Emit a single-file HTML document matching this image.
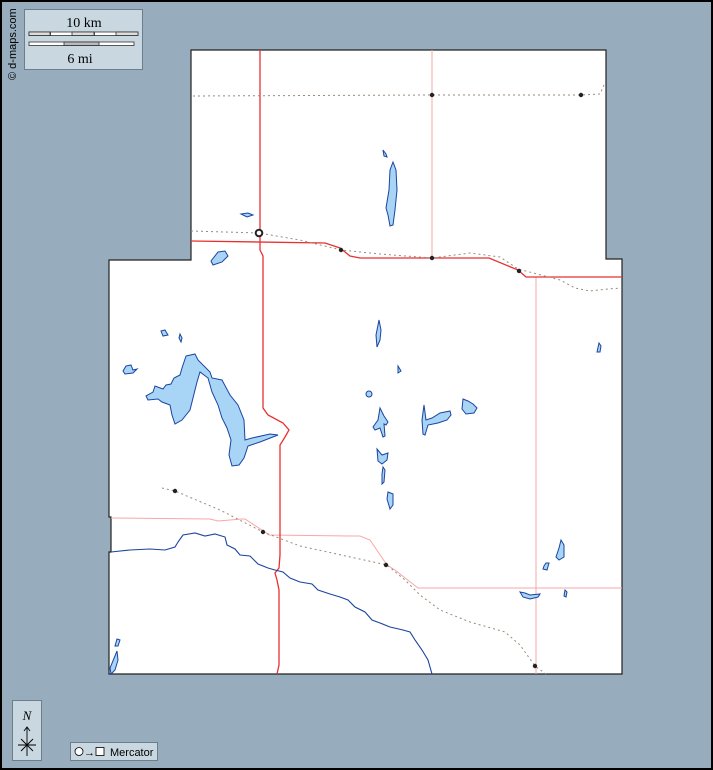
<!DOCTYPE html>
<html><head><meta charset="utf-8"><style>
html,body{margin:0;padding:0;width:713px;height:770px;overflow:hidden;background:#000}
svg{display:block}
</style></head><body>
<svg width="713" height="770" viewBox="0 0 713 770" xmlns="http://www.w3.org/2000/svg">
<rect x="0" y="0" width="713" height="770" fill="#000"/>
<rect x="2" y="2" width="709" height="766" fill="#97adbd"/>
<!-- map area -->
<path d="M191,50 L606,50 L606,259 L622,259 L622,674 L109,674 L109,552 L111,552 L111,517 L109,517 L109,260 L191,260 Z" fill="#fff" stroke="#222" stroke-width="1.2"/>
<!-- minor roads pink -->
<g fill="none" stroke="#f6a8a8" stroke-width="1">
<path d="M432,50 L432,258"/>
<path d="M536,277 L536,674"/>
<path d="M111,518 L210,519 L218,521 L242,519 L245,519 L265,532 L269,535 L350,536 L360,536 L370,540 L387,565 L395,570 L418,588 L622,588"/>
</g>
<!-- major road red -->
<g fill="none" stroke="#e83030" stroke-width="1.3">
<path d="M260,50 L260,232 L260,250 L263,256 L263,408 L268,415 L283,423 L289,430 L285,437 L280,445 L280,520 L280,555 L279,568 L275,573 L277,580 L279,590 L279,665 L277,674"/>
<path d="M191,241 L325,243 L340,248 L350,256 L360,258 L432,258 L489,258 L518,270 L526,277 L622,277"/>
</g>
<!-- railways dotted -->
<g fill="none" stroke="#9a8a7a" stroke-width="1" stroke-dasharray="2,3">
<path d="M193,96 L432,95 L581,95 L600,94 L604,85"/>
<path d="M191,231 L259,233 L300,240 L341,250 L380,254 L432,258 L470,253 L500,257 L518,269 L560,280 L575,288 L590,291 L608,289 L622,288"/>
<path d="M162,488 L175,491 L220,510 L263,532 L300,546 L387,565 L405,580 L420,595 L440,610 L470,622 L505,632 L520,645 L535,666 L546,674"/>
</g>
<!-- rivers -->
<g fill="none" stroke="#1a44a0" stroke-width="1.1">
<path d="M111,552 L130,550 L150,549 L165,550 L175,547 L178,542 L183,535 L195,533 L205,536 L215,534 L225,537 L227,545 L235,549 L240,555 L250,556 L258,564 L268,568 L275,570 L283,572 L290,578 L300,582 L312,584 L318,590 L330,594 L340,597 L348,600 L355,607 L365,612 L372,620 L380,623 L390,627 L403,630 L410,632 L415,640 L422,650 L428,660 L432,674"/>
</g>
<!-- lakes -->
<g fill="#a8d4f5" stroke="#1a44a0" stroke-width="1">
<path d="M393,162 L396,170 L397,190 L395,210 L393,225 L390,226 L388,215 L386,208 L389,190 L390,170 Z"/>
<path d="M383,150 L386,154 L387,157 L384,156 Z"/>
<path d="M241,214 L248,213 L253,215 L247,217 Z"/>
<path d="M218,252 L225,251 L228,256 L222,262 L213,265 L211,261 Z"/>
<path d="M186,356 L195,354 L198,360 L210,372 L212,378 L222,380 L230,395 L238,405 L244,420 L245,440 L252,438 L270,434 L278,435 L260,442 L248,446 L244,458 L239,465 L232,466 L229,455 L231,440 L227,428 L222,418 L218,405 L212,392 L208,378 L200,372 L197,382 L193,398 L190,410 L182,420 L175,424 L172,415 L170,405 L162,402 L158,399 L148,400 L146,396 L153,392 L155,386 L163,389 L166,385 L171,384 L174,378 L180,375 L182,368 Z"/>
<path d="M126,366 L131,365 L133,370 L137,369 L133,373 L125,374 L123,371 Z"/>
<path d="M161,331 L165,330 L168,335 L163,336 Z"/>
<path d="M180,334 L182,338 L181,342 L179,338 Z"/>
<path d="M379,320 L381,330 L380,340 L377,347 L376,335 Z"/>
<path d="M398,366 L401,371 L398,373 Z"/>
<circle cx="369" cy="394" r="3"/>
<path d="M380,408 L384,416 L388,422 L386,425 L384,424 L385,436 L383,437 L380,428 L375,430 L373,427 L378,420 Z"/>
<path d="M424,405 L426,420 L432,418 L440,413 L450,411 L451,415 L447,420 L438,423 L428,425 L425,435 L423,434 L422,420 Z"/>
<path d="M463,399 L468,401 L473,404 L477,408 L474,413 L466,414 L462,409 Z"/>
<path d="M377,449 L382,455 L388,453 L387,460 L382,464 L378,461 Z"/>
<path d="M383,467 L385,470 L384,482 L382,484 L382,474 Z"/>
<path d="M388,492 L393,494 L393,505 L390,509 L387,499 Z"/>
<path d="M599,343 L601,346 L600,352 L597,352 Z"/>
<path d="M561,540 L564,545 L564,557 L559,560 L556,557 L559,548 Z"/>
<path d="M546,563 L549,563 L547,570 L543,569 L544,566 Z"/>
<path d="M520,592 L525,593 L530,595 L540,594 L538,597 L530,599 L523,597 Z"/>
<path d="M565,590 L567,592 L566,597 L564,596 Z"/>
<path d="M117,639 L120,640 L118,646 L115,646 Z"/>
<path d="M117,651 L118,660 L115,670 L111,674 L110,668 Z"/>
</g>
<!-- towns -->
<g fill="#222">
<circle cx="432" cy="95" r="2.2"/><circle cx="581" cy="95" r="2.2"/>
<circle cx="341" cy="250" r="2.2"/><circle cx="432" cy="258" r="2.2"/><circle cx="519" cy="271" r="2.2"/>
<circle cx="175" cy="491" r="2.2"/><circle cx="263" cy="532" r="2.2"/><circle cx="386" cy="565" r="2.2"/><circle cx="535" cy="666" r="2.2"/>
</g>
<circle cx="259" cy="233" r="3.3" fill="#fff" stroke="#222" stroke-width="2"/>
<!-- scale box -->
<rect x="24.5" y="9.5" width="118" height="60" fill="#c8d7e0" stroke="#6c7e8b"/>
<text x="84" y="27" font-family="Liberation Serif,serif" font-size="14" text-anchor="middle" fill="#000">10 km</text>
<rect x="29" y="32" width="109" height="3.5" fill="#fff" stroke="#333" stroke-width="0.8"/>
<g stroke="#333" stroke-width="0.8"><path d="M50.5,32V36M72.5,32V36M94.5,32V36M116.5,32V36"/></g>
<rect x="29" y="32" width="21" height="3.5" fill="#ddd" stroke="#333" stroke-width="0.8"/>
<rect x="72" y="32" width="22" height="3.5" fill="#ddd" stroke="#333" stroke-width="0.8"/>
<rect x="116" y="32" width="22" height="3.5" fill="#ddd" stroke="#333" stroke-width="0.8"/>
<rect x="29" y="42" width="105" height="3.5" fill="#fff" stroke="#333" stroke-width="0.8"/>
<rect x="64" y="42" width="35" height="3.5" fill="#bbb" stroke="#333" stroke-width="0.8"/>
<text x="80" y="63" font-family="Liberation Serif,serif" font-size="14" text-anchor="middle" fill="#000">6 mi</text>
<text transform="translate(16,80) rotate(-90)" font-family="Liberation Sans,sans-serif" font-size="11" fill="#000">© d-maps.com</text>
<!-- compass -->
<rect x="12.5" y="700.5" width="29" height="60" fill="#c8d7e0" stroke="#6c7e8b"/>
<text x="27" y="720" font-family="Liberation Serif,serif" font-size="13" font-style="italic" text-anchor="middle" fill="#000">N</text>
<g stroke="#000" stroke-width="0.9" fill="none">
<path d="M27,727V756M24,731L27,727L30,731M18,745H36M21,739L33,751M33,739L21,751"/>
</g>
<rect x="70.5" y="742.5" width="87" height="18" fill="#c8d7e0" stroke="#6c7e8b"/>
<circle cx="79" cy="751.5" r="4" fill="#fff" stroke="#000" stroke-width="0.8"/>
<text x="84" y="756" font-family="Liberation Sans,sans-serif" font-size="11" fill="#000">→</text>
<rect x="96" y="747.5" width="8" height="8" fill="#fff" stroke="#000" stroke-width="0.8"/>
<text x="110" y="756" font-family="Liberation Sans,sans-serif" font-size="11" fill="#000">Mercator</text>
</svg>
</body></html>
